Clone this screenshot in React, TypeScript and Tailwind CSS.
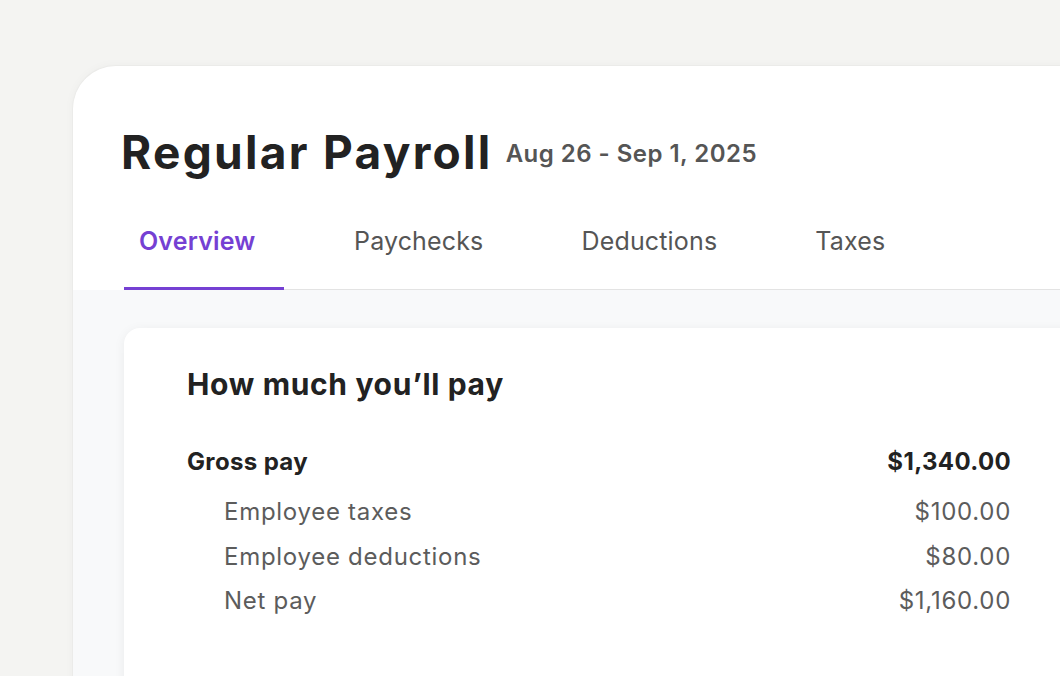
import React from "react";

export default function App() {
  const rows = [
    { label: "Employee taxes", value: "$100.00" },
    { label: "Employee deductions", value: "$80.00" },
    { label: "Net pay", value: "$1,160.00" },
  ];
  return (
    <div
      className="w-[1060px] h-[676px] overflow-hidden bg-[#f4f4f2] pt-[65px] pl-[72px]"
      style={{ fontFamily: "Inter, 'Noto Sans', sans-serif" }}
    >
      <div className="w-[1100px] h-[700px] bg-white rounded-tl-[44px] border-l border-t border-[#ebebe9] shadow-[0_0_10px_rgba(0,0,0,0.03)] flex flex-col">
        <div className="pl-[48px] pt-[58px] flex items-center gap-[13px]">
          <h1 className="text-[46px] leading-[56px] font-bold text-[#222222] tracking-[0.05em]">
            Regular Payroll
          </h1>
          <span className="text-[24px] leading-[32px] font-semibold text-[#555555] mt-[4px] tracking-[0.02em]">
            Aug 26 - Sep 1, 2025
          </span>
        </div>
        <div className="ml-[51px] mt-[45px] flex border-b border-[#e3e3e3] tracking-[0.01em]">
          <div className="w-[160px] pl-[15px] pb-[30px] border-b-[3px] border-[#7540d3] -mb-[1px]">
            <span className="text-[25px] leading-[32px] font-semibold text-[#7540d3]">Overview</span>
          </div>
          <div className="ml-[70px] flex gap-[98px] text-[25px] leading-[32px] text-[#555555]">
            <span>Paychecks</span>
            <span>Deductions</span>
            <span>Taxes</span>
          </div>
        </div>
        <div className="flex-1 bg-[#f8f9fa] pl-[51px] pt-[38px]">
          <div className="w-[950px] h-[400px] bg-white rounded-tl-[16px] shadow-[0_2px_12px_rgba(0,0,0,0.06)] pl-[63px] pr-[63px] pt-[36px]">
            <h2 className="text-[30px] leading-[40px] font-bold text-[#222222] tracking-[0.022em]">
              How much you’ll pay
            </h2>
            <div className="mt-[42px] flex justify-between text-[24px] leading-[32px] font-bold text-[#222222] tracking-[0.015em]">
              <span>Gross pay</span>
              <span>$1,340.00</span>
            </div>
            <div className="mt-[12px] flex flex-col">
              {rows.map((r) => (
                <div
                  key={r.label}
                  className="flex justify-between pl-[37px] h-[44.5px] items-center text-[24px] text-[#5c5c5c] tracking-[0.03em]"
                >
                  <span>{r.label}</span>
                  <span>{r.value}</span>
                </div>
              ))}
            </div>
          </div>
        </div>
      </div>
    </div>
  );
}
